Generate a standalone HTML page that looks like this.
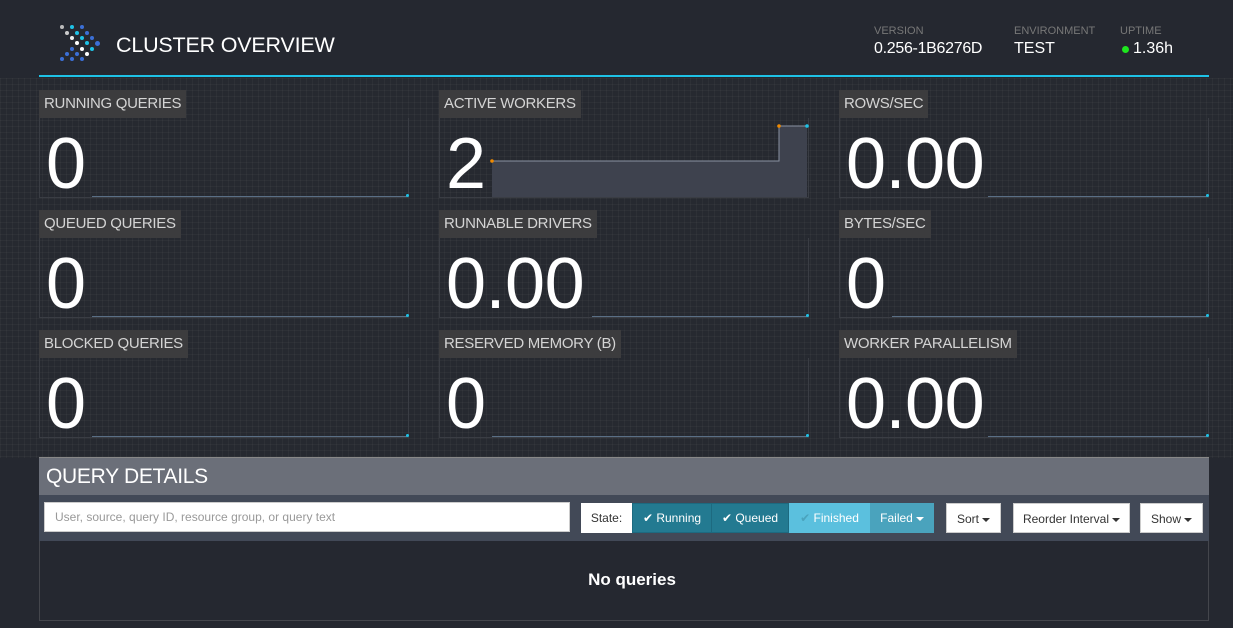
<!DOCTYPE html>
<html><head><meta charset="utf-8"><style>
*{margin:0;padding:0;box-sizing:border-box}
body{width:1233px;height:628px;background:#252830;font-family:"Liberation Sans",sans-serif;position:relative;overflow:hidden;color:#fff}
.grid{position:absolute;left:0;top:78px;width:1233px;height:380px;background-color:#262930;
background-image:linear-gradient(rgba(255,255,255,.03) 1px,transparent 1px),linear-gradient(90deg,rgba(255,255,255,.03) 1px,transparent 1px);background-size:6px 6px}
.abs{position:absolute}
.lbl{position:absolute;height:28px;background:#3c3c3e;color:#d4d4d4;font-size:15px;letter-spacing:-0.3px;line-height:28px;padding:0 5px;white-space:nowrap}
.box{position:absolute;width:370px;height:80px;border:1px solid #3a3d44;border-top:none}
.num{position:absolute;font-size:72px;line-height:72px;color:#fff;left:6px;top:10px;letter-spacing:-0.5px}
.hl{position:absolute;height:1px;background:#5a6f85}
.dot{position:absolute;width:3px;height:3px;border-radius:50%;background:#1ec2e6}
.d{position:absolute;width:4px;height:4px;border-radius:50%}
.btn{position:absolute;top:503px;height:30px;background:#fff;color:#333;font-size:12px;line-height:30px;text-align:center;border:1px solid #ccc}
.car{display:inline-block;width:0;height:0;border-left:4px solid transparent;border-right:4px solid transparent;border-top:4px solid currentColor;vertical-align:middle;margin-left:3px}
</style></head><body>
<div class="grid"></div>
<div class="d" style="left:60px;top:25px;background:#bbb"></div>
<div class="d" style="left:70px;top:25px;background:#1ec2e6"></div>
<div class="d" style="left:80px;top:25px;background:#3b6fd6"></div>
<div class="d" style="left:65px;top:31px;background:#ccc"></div>
<div class="d" style="left:75px;top:31px;background:#1ec2e6"></div>
<div class="d" style="left:85px;top:31px;background:#3b6fd6"></div>
<div class="d" style="left:70px;top:36px;background:#eee"></div>
<div class="d" style="left:80px;top:36px;background:#1ec2e6"></div>
<div class="d" style="left:90px;top:36px;background:#3b6fd6"></div>
<div class="d" style="left:75px;top:41px;background:#fff"></div>
<div class="d" style="left:85px;top:41px;background:#1ec2e6"></div>
<div class="d" style="left:95px;top:41px;background:#3b6fd6;width:5px;height:5px"></div>
<div class="d" style="left:70px;top:47px;background:#3b6fd6"></div>
<div class="d" style="left:80px;top:47px;background:#fff"></div>
<div class="d" style="left:90px;top:47px;background:#1ec2e6"></div>
<div class="d" style="left:65px;top:52px;background:#3b6fd6"></div>
<div class="d" style="left:75px;top:52px;background:#3b6fd6"></div>
<div class="d" style="left:85px;top:52px;background:#fff"></div>
<div class="d" style="left:60px;top:57px;background:#3b6fd6"></div>
<div class="d" style="left:70px;top:57px;background:#3b6fd6"></div>
<div class="d" style="left:80px;top:57px;background:#3b6fd6"></div>
<div class="abs" style="left:116px;top:32px;font-size:21.5px;line-height:26px;letter-spacing:-0.2px">CLUSTER OVERVIEW</div>
<div class="abs" style="left:874px;top:25px;font-size:11px;color:#777">VERSION</div>
<div class="abs" style="left:874px;top:40px;font-size:16px;letter-spacing:-0.3px">0.256-1B6276D</div>
<div class="abs" style="left:1014px;top:25px;font-size:11px;color:#777">ENVIRONMENT</div>
<div class="abs" style="left:1014px;top:40px;font-size:16px">TEST</div>
<div class="abs" style="left:1120px;top:25px;font-size:11px;color:#777">UPTIME</div>
<div class="abs" style="left:1122px;top:46px;width:7px;height:7px;border-radius:50%;background:#1ee61e"></div>
<div class="abs" style="left:1133px;top:40px;font-size:16px">1.36h</div>
<div class="abs" style="left:39px;top:75px;width:1170px;height:2px;background:#1ec2e6"></div>

<div class="box" style="left:39px;top:118px"><div class="num">0</div></div>
<div class="lbl" style="left:39px;top:90px">RUNNING QUERIES</div>
<div class="hl" style="left:92px;top:196px;width:315px"></div><div class="dot" style="left:406px;top:194px"></div>

<div class="box" style="left:439px;top:118px"><div class="num">2</div></div>
<div class="lbl" style="left:439px;top:90px">ACTIVE WORKERS</div>
<svg class="abs" style="left:490px;top:123px" width="320" height="76"><path d="M2 38 H289 V3 H317 V74 H2Z" fill="#3e424e"/><path d="M2 38 H289 V3 H317" fill="none" stroke="#8b93a3" stroke-width="1"/><circle cx="2" cy="38" r="1.8" fill="#f08a00"/><circle cx="289" cy="3" r="1.8" fill="#f08a00"/><circle cx="317" cy="3" r="1.8" fill="#1ec2e6"/></svg>

<div class="box" style="left:839px;top:118px"><div class="num">0.00</div></div>
<div class="lbl" style="left:839px;top:90px">ROWS/SEC</div>
<div class="hl" style="left:988px;top:196px;width:219px"></div><div class="dot" style="left:1206px;top:194px"></div>

<div class="box" style="left:39px;top:238px"><div class="num">0</div></div>
<div class="lbl" style="left:39px;top:210px">QUEUED QUERIES</div>
<div class="hl" style="left:92px;top:316px;width:315px"></div><div class="dot" style="left:406px;top:314px"></div>

<div class="box" style="left:439px;top:238px"><div class="num">0.00</div></div>
<div class="lbl" style="left:439px;top:210px">RUNNABLE DRIVERS</div>
<div class="hl" style="left:592px;top:316px;width:215px"></div><div class="dot" style="left:806px;top:314px"></div>

<div class="box" style="left:839px;top:238px"><div class="num">0</div></div>
<div class="lbl" style="left:839px;top:210px">BYTES/SEC</div>
<div class="hl" style="left:892px;top:316px;width:315px"></div><div class="dot" style="left:1206px;top:314px"></div>

<div class="box" style="left:39px;top:358px"><div class="num">0</div></div>
<div class="lbl" style="left:39px;top:330px">BLOCKED QUERIES</div>
<div class="hl" style="left:92px;top:436px;width:315px"></div><div class="dot" style="left:406px;top:434px"></div>

<div class="box" style="left:439px;top:358px"><div class="num">0</div></div>
<div class="lbl" style="left:439px;top:330px">RESERVED MEMORY (B)</div>
<div class="hl" style="left:492px;top:436px;width:315px"></div><div class="dot" style="left:806px;top:434px"></div>

<div class="box" style="left:839px;top:358px"><div class="num">0.00</div></div>
<div class="lbl" style="left:839px;top:330px">WORKER PARALLELISM</div>
<div class="hl" style="left:988px;top:436px;width:219px"></div><div class="dot" style="left:1206px;top:434px"></div>

<div class="abs" style="left:39px;top:457px;width:1170px;height:164px;border:1px solid #44464c"></div>
<div class="abs" style="left:39px;top:457px;width:1170px;height:38px;background:#6b6f79;border-top:1px solid #888"></div>
<div class="abs" style="left:46px;top:464px;font-size:21px;line-height:26px;color:#fff;letter-spacing:-0.3px">QUERY DETAILS</div>
<div class="abs" style="left:39px;top:495px;width:1170px;height:46px;background:#424957"></div>
<div class="abs" style="left:44px;top:502px;width:526px;height:30px;background:#fff;border:1px solid #ccc;font-size:12px;color:#999;line-height:28px;padding-left:10px">User, source, query ID, resource group, or query text</div>
<div class="abs" style="left:581px;top:503px;width:51px;height:30px;background:#fff;color:#333;font-size:12px;line-height:30px;text-align:center">State:</div>
<div class="abs" style="left:632px;top:503px;width:80px;height:30px;background:#237a91;border:1px solid #1d6a80;font-size:12px;line-height:28px;text-align:center">✔ Running</div>
<div class="abs" style="left:711px;top:503px;width:78px;height:30px;background:#237a91;border:1px solid #1d6a80;font-size:12px;line-height:28px;text-align:center">✔ Queued</div>
<div class="abs" style="left:789px;top:503px;width:81px;height:30px;background:#5bc0de;font-size:12px;line-height:30px;text-align:center"><span style="color:#4aa3bd">✔</span> Finished</div>
<div class="abs" style="left:870px;top:503px;width:64px;height:30px;background:#4aa3bd;font-size:12px;line-height:30px;text-align:center">Failed<span class="car"></span></div>
<div class="btn" style="left:946px;width:55px">Sort<span class="car"></span></div>
<div class="btn" style="left:1013px;width:117px">Reorder Interval<span class="car"></span></div>
<div class="btn" style="left:1140px;width:63px">Show<span class="car"></span></div>
<div class="abs" style="left:47px;top:570px;width:1170px;text-align:center;font-size:17px;font-weight:bold;color:#fff">No queries</div>
</body></html>
